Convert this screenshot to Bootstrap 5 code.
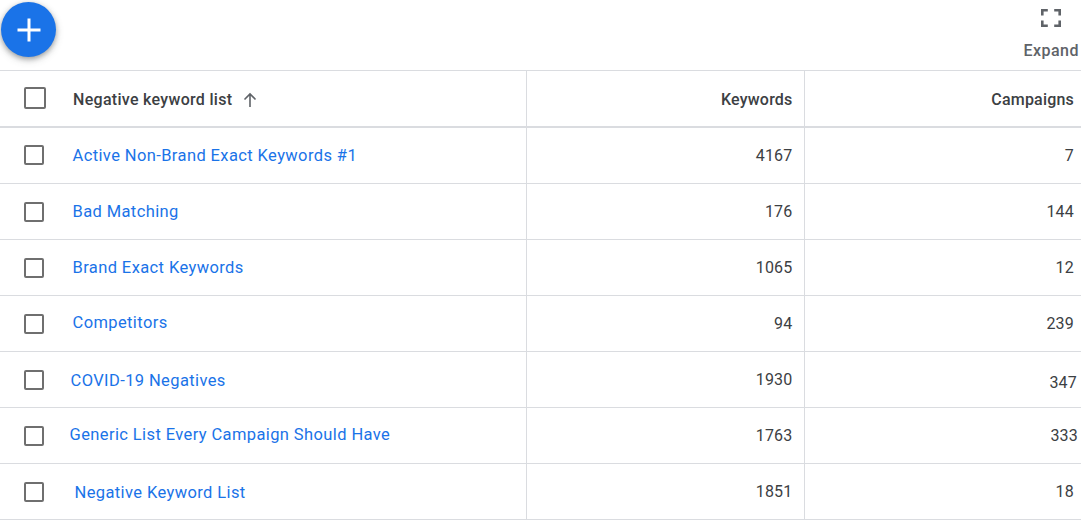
<!DOCTYPE html>
<html lang="en">
<head>
  <meta charset="UTF-8" />
  <meta name="viewport" content="width=device-width, initial-scale=1" />
  <title>Negative keyword lists</title>
  <link rel="stylesheet" href="https://cdn.jsdelivr.net/npm/bootstrap@5.3.3/dist/css/bootstrap.min.css"/>
  <style>
    html, body { height: 525px; overflow: hidden; }
    body { font-family: Roboto, "Liberation Sans", sans-serif; color: #3c4043; background: #fff; }
    .topbar { height: 70px; }
    .fab { width: 55px; height: 55px; margin: 2px 0 0 1px; background: #1a73e8; border: 0; box-shadow: 0 2px 5px rgba(60,64,67,.4), 0 3px 9px rgba(60,64,67,.2); }
    .expand { color: #5f6368; font-size: 16px; font-weight: 500; letter-spacing: .5px; line-height: 20px; padding: 8px 2px 0 0; }
    .expand svg { display: block; margin: 1px 0 14px; }
    .kw-table { table-layout: fixed; width: 1081px; margin: 0; border-top: 1px solid #dadce0; }
    .kw-table th, .kw-table td { padding: 0 4px 0 0; height: 56px; border-bottom: 1px solid #dadce0; box-shadow: none; font-size: 16px; vertical-align: middle; color: #3c4043; letter-spacing: .2px; }
    .kw-table thead th { height: 56px; border-bottom: 2px solid #dadce0; font-weight: 500; color: #3c4043; }
    .kw-table tbody tr:first-child td { height: 57px; }
    .kw-table .col-num { text-align: right; padding-right: 11px; border-left: 1px solid #dadce0; }
    .kw-table thead .col-num { padding-top: 4px; }
    .kw-table tbody tr:first-child .col-num { padding-top: 2px; }
    .kw-table .col-last { padding-right: 7px; }
    .kw-table a { color: #1a73e8; text-decoration: none; font-size: 16.5px; letter-spacing: .39px; }
    .box { display: block; flex: none; width: 20px; height: 20px; margin: 0 0 0 24px; border: 2px solid #6f6f6f; border-radius: 2px; }
    .head-box { width: 22px; height: 22px; margin-left: 24px; }
    .name-cell { display: flex; align-items: center; }
    .name-cell > span:last-child { margin-left: 28.5px; margin-top: 2px; }
    .name-head > span:nth-child(2) { margin-left: 27px; margin-top: 4px; letter-spacing: .3px; }
    .name-head > span.sort { margin-left: 9px; margin-top: 4px; }
    .shift-l2 > span:last-child { margin-left: 26.5px; }
    .shift-l3 > span:last-child { margin-left: 25.5px; }
    .shift-r2 > span:last-child { margin-left: 30.5px; }
    .nudge-up > span:last-child { margin-top: 0; }
    .nudge-down > span:last-child { margin-top: 3px; }
    .kw-table .num-down { padding-top: 6px; }
    .kw-table .num-r3 { padding-right: 4px; }
    .kw-table .num-r4 { padding-right: 3px; }
  </style>
</head>
<body>
  <div class="topbar d-flex justify-content-between align-items-start">
    <button class="fab btn rounded-circle d-flex align-items-center justify-content-center p-0" aria-label="Add">
      <svg width="24" height="24" viewBox="0 0 24 24"><path d="M12 .5v23M.5 12h23" stroke="#fff" stroke-width="3" fill="none"/></svg>
    </button>
    <div class="expand d-flex flex-column align-items-center">
      <svg width="20" height="18" viewBox="0 0 20 18"><path d="M1.3 6.5V1.3h5.5M13.2 1.3h5.5v5.2M18.7 11.5v5.2h-5.5M6.8 16.7H1.3v-5.2" stroke="#5f6368" stroke-width="2.6" fill="none"/></svg>
      <span>Expand</span>
    </div>
  </div>

  <table class="table kw-table">
    <colgroup><col style="width:526px"><col style="width:278px"><col style="width:277px"></colgroup>
    <thead>
      <tr>
        <th><div class="name-cell name-head"><span class="box head-box"></span><span>Negative keyword list</span><span class="sort"><svg class="d-block" width="18" height="18" viewBox="0 0 18 18"><path d="M9 16V3M3.5 8.5 9 3l5.5 5.5" stroke="#5f6368" stroke-width="1.6" fill="none"/></svg></span></div></th>
        <th class="col-num">Keywords</th>
        <th class="col-num col-last">Campaigns</th>
      </tr>
    </thead>
    <tbody id="rows"></tbody>
  </table>

<script>
const rows = [
  ['Active Non-Brand Exact Keywords #1', 4167, 7, '', ''],
  ['Bad Matching', 176, 144, '', ''],
  ['Brand Exact Keywords', 1065, 12, '', ''],
  ['Competitors', 94, 239, 'nudge-up', ''],
  ['COVID-19 Negatives', 1930, 347, 'shift-l2 nudge-down', 'num-r3 num-down'],
  ['Generic List Every Campaign Should Have', 1763, 333, 'shift-l3 nudge-up', 'num-r4'],
  ['Negative Keyword List', 1851, 18, 'shift-r2 nudge-down', '']
];
document.getElementById('rows').innerHTML = rows.map(r => `
  <tr>
    <td><div class="name-cell ${r[3]}"><span class="box"></span><span><a href="#">${r[0]}</a></span></div></td>
    <td class="col-num">${r[1]}</td>
    <td class="col-num col-last ${r[4]}">${r[2]}</td>
  </tr>`).join('');
</script>
<script src="https://cdn.jsdelivr.net/npm/bootstrap@5.3.3/dist/js/bootstrap.bundle.min.js"></script>
</body>
</html>
